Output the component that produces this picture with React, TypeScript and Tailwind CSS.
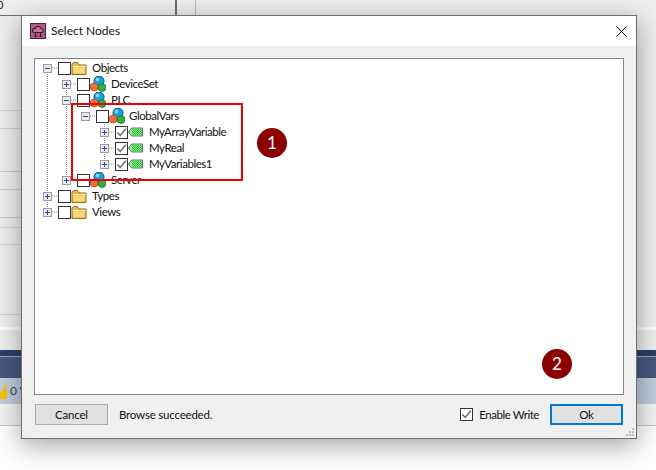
import React from "react";

const FONT = "font-['Lato','Open_Sans',sans-serif]";

function Folder() {
  return (
    <svg width="16" height="15" viewBox="0 0 16 15" className="shrink-0">
      <path d="M1 3 L1 13.5 L15 13.5 L15 4 L8 4 L6.5 1.5 L2.5 1.5 Z" fill="#eeb840" stroke="#8f7028" strokeWidth="1" />
      <path d="M2 6.5 L14 6.5 L14 12.5 L2 12.5 Z" fill="#f9d878" />
      <path d="M1.5 5.5 L14.5 5.5" stroke="#fff3c4" strokeWidth="1" />
    </svg>
  );
}

function Blobs() {
  return (
    <svg width="16" height="16" viewBox="0 0 16 16" className="shrink-0">
      <circle cx="9" cy="5" r="5" fill="#12a5ea" stroke="#0b4f96" strokeWidth="1" />
      <circle cx="7.5" cy="3.5" r="1.8" fill="#86dcfa" />
      <circle cx="4.2" cy="11" r="4" fill="#f0703a" stroke="#a8421a" strokeWidth="0.8" />
      <circle cx="12" cy="11.5" r="3.9" fill="#2fb040" stroke="#186e24" strokeWidth="0.8" />
    </svg>
  );
}

function Tag() {
  return (
    <svg width="15" height="10" viewBox="0 0 15 10" className="shrink-0">
      <path d="M0.5 5 L3.5 1 L14.5 1 L14.5 9 L3.5 9 Z" fill="#8fec8f" stroke="#6e6e6e" strokeWidth="1" />
      <path d="M4 2.5 H14 M5 3.5 H14 M4 4.5 H14 M5 5.5 H14 M4 6.5 H14 M5 7.5 H14" stroke="#12c424" strokeWidth="1" strokeDasharray="1 1" />
    </svg>
  );
}

function Check({ checked }: { checked?: boolean }) {
  return (
    <span className="w-[13px] h-[13px] border border-[#333333] bg-white shrink-0 flex items-center justify-center">
      {checked && (
        <svg width="11" height="11" viewBox="0 0 11 11">
          <path d="M1.5 5.5 L4.2 8.5 L9.8 1.8" fill="none" stroke="#666666" strokeWidth="1.4" />
        </svg>
      )}
    </span>
  );
}

function Expander({ open }: { open?: boolean }) {
  return (
    <span className="w-[9px] h-[9px] border border-[#9a9aa2] bg-[#e8eaf0] shrink-0 flex items-center justify-center">
      <svg width="7" height="7" viewBox="0 0 7 7">
        <path d={open ? "M1 3.5 H6" : "M1 3.5 H6 M3.5 1 V6"} stroke="#2c4a8c" strokeWidth="1" />
      </svg>
    </span>
  );
}

type RowT = { label: string; pad: string; gap: string; icon: "folder" | "blobs" | "tag"; open?: boolean; checked?: boolean };

const rows: RowT[] = [
  { label: "Objects", pad: "pl-[8px]", gap: "ml-[5px]", icon: "folder", open: true },
  { label: "DeviceSet", pad: "pl-[27px]", gap: "ml-[5px]", icon: "blobs" },
  { label: "PLC", pad: "pl-[27px]", gap: "ml-[5px]", icon: "blobs", open: true },
  { label: "GlobalVars", pad: "pl-[46px]", gap: "ml-[4px]", icon: "blobs", open: true },
  { label: "MyArrayVariable", pad: "pl-[65px]", gap: "ml-[6px]", icon: "tag", checked: true },
  { label: "MyReal", pad: "pl-[65px]", gap: "ml-[6px]", icon: "tag", checked: true },
  { label: "MyVariables1", pad: "pl-[65px]", gap: "ml-[6px]", icon: "tag", checked: true },
  { label: "Server", pad: "pl-[27px]", gap: "ml-[5px]", icon: "blobs" },
  { label: "Types", pad: "pl-[8px]", gap: "ml-[5px]", icon: "folder" },
  { label: "Views", pad: "pl-[8px]", gap: "ml-[5px]", icon: "folder" },
];

function TreeRow({ r }: { r: RowT }) {
  return (
    <div className={`h-[16px] flex items-center ${r.pad}`}>
      <Expander open={r.open} />
      <span className="w-[6px]" />
      <Check checked={r.checked} />
      {r.icon === "folder" && <Folder />}
      {r.icon === "blobs" && <Blobs />}
      {r.icon === "tag" && <Tag />}
      <span className={`${r.gap} text-[11.5px] leading-[16px] tracking-[-0.45px] text-[#111111] whitespace-nowrap`}>{r.label}</span>
    </div>
  );
}

function Lines() {
  // Dotted connectors of the tree, in panel coordinates
  const d = [
    "M12.5 9 V153", "M31.5 25 V121", "M69.5 65 V105",
    "M17 9 H23", "M36 25 H42", "M36 41 H42", "M55 57 H61",
    "M74 73 H80", "M74 89 H80", "M74 105 H80", "M36 121 H42", "M17 137 H23", "M17 153 H23",
  ];
  return (
    <svg className="absolute left-0 top-0" width="120" height="170">
      {d.map((p) => (
        <path key={p} d={p} stroke="#8a8a8a" strokeWidth="1" strokeDasharray="1 1" fill="none" />
      ))}
    </svg>
  );
}

function Badge({ n, cls }: { n: string; cls: string }) {
  return (
    <div className={`absolute ${cls} w-[30px] h-[30px] rounded-full bg-[#8b0000] text-white flex items-center justify-center text-[17px]`}>
      {n}
    </div>
  );
}

export default function App() {
  return (
    <div className={`relative w-[656px] h-[470px] overflow-hidden bg-white flex flex-col ${FONT}`}>
      {/* Application behind the dialog */}
      <div className="bg-[#f0f0f0] shrink-0">
        <div className="h-[16px] w-[600px] border-b border-[#707070] flex">
          <span className="text-[11px] leading-[10px] text-[#1a1a1a] -ml-[3px]">0</span>
          <span className="ml-[172px] w-[2px] h-full bg-[#707070]" />
          <span className="ml-[18px] w-[1px] h-full bg-[#b8b8b8]" />
        </div>
        <div className="h-[311px] w-[600px] flex flex-col">
          <div className="h-[95px] border-b border-[#d4d4d4]" />
          <div className="h-[18px] border-b border-[#d4d4d4]" />
          <div className="h-[43px] border-b border-[#cfcfcf]" />
          <div className="h-[18px] border-b border-[#cfcfcf]" />
          <div className="h-[28px] border-b border-[#cfcfcf]" />
          <div className="h-[10px] border-b border-[#d4d4d4]" />
          <div className="h-[17px] border-b border-[#d4d4d4]" />
          <div className="h-[70px] border-b border-[#d4d4d4]" />
        </div>
      </div>
      <div className="h-[3px] bg-white w-full shrink-0" />
      <div className="h-[20px] bg-[#f0f0f0] shrink-0" />
      <div className="h-[6px] bg-[#2b4068] shrink-0" />
      <div className="h-[1px] bg-[#9aa8c4] shrink-0" />
      <div className="h-[21px] bg-[#47597d] shrink-0" />
      <div className="h-[26px] bg-[#c3cde0] shrink-0 flex items-center">
        <svg width="7" height="16" viewBox="0 0 7 16" className="shrink-0">
          <path d="M6.5 0 L-3 16 L7 16 Z" fill="#f8c400" />
        </svg>
        <span className="ml-[3px] text-[12px] text-[#33415f]">0 V</span>
      </div>
      <div className="h-[22px] bg-[#f4f4f4] border-b border-[#c5c5cf] shrink-0" />
      <div className="flex-1 bg-white" />

      {/* Dialog window */}
      <div className="absolute left-[21px] top-[15px] w-[616px] h-[424px] border border-[#6e6e6e] bg-[#f0f0f0] flex flex-col shadow-[0_6px_26px_rgba(0,0,0,0.38)]">
        <div className="h-[30px] bg-white flex items-center shrink-0 pl-[8px] pr-[9px]">
          <svg width="16" height="16" viewBox="0 0 16 16" className="shrink-0">
            <rect width="16" height="16" fill="#5e1a3c" />
            <rect x="1" y="1" width="14" height="14" fill="#a85f82" />
            <path d="M3.5 9.5 C1.5 8 3 5 5 5.5 C6 2.5 10.5 3 11 5.5 C13.5 5.5 14 9 12 9.5 Z" fill="#b87a98" stroke="#3f0d28" strokeWidth="1.1" />
            <path d="M5.5 10 V14 M4 12.5 L5.5 14 L7 12.5 M10.5 10 V14 M9 12.5 L10.5 14 L12 12.5" fill="none" stroke="#3f0d28" strokeWidth="1" />
          </svg>
          <span className="ml-[5px] text-[12px] text-[#111111]">Select Nodes</span>
          <svg width="11" height="11" viewBox="0 0 11 11" className="ml-auto">
            <path d="M0.5 0.5 L10.5 10.5 M10.5 0.5 L0.5 10.5" stroke="#111111" strokeWidth="1" />
          </svg>
        </div>

        <div className="flex-1 flex flex-col pt-[12px] pl-[12px] pr-[12px] min-h-0">
          <div className="relative h-[337px] w-[590px] border border-[#828790] bg-white pt-[1px] shrink-0">
            <Lines />
            <div className="relative flex flex-col">
              {rows.map((r) => (
                <TreeRow key={r.label} r={r} />
              ))}
            </div>
          </div>
          <div className="flex items-center mt-[9px] h-[21px] pl-[1px] pr-[1px] text-[11.5px] tracking-[-0.2px] text-[#111111]">
            <div className="w-[73px] h-[21px] border border-[#adadad] bg-[#e1e1e1] flex items-center justify-center">Cancel</div>
            <span className="ml-[11px] mt-[1px]">Browse succeeded.</span>
            <span className="ml-auto"><Check checked /></span>
            <span className="ml-[6px] tracking-[-0.45px]">Enable Write</span>
            <div className="ml-[11px] w-[73px] h-[21px] border-2 border-[#0078d7] bg-[#e1e1e1] flex items-center justify-center">Ok</div>
          </div>
        </div>

        <svg className="absolute right-[1px] bottom-[1px]" width="10" height="10" viewBox="0 0 10 10">
          <path d="M7 1 h2 v2 h-2 z M4 4 h2 v2 h-2 z M7 4 h2 v2 h-2 z M1 7 h2 v2 h-2 z M4 7 h2 v2 h-2 z M7 7 h2 v2 h-2 z" fill="#bdbdbd" />
        </svg>
      </div>

      {/* Annotations */}
      <div className="absolute left-[71px] top-[103px] w-[172px] h-[78px] border-2 border-[#f00000]" />
      <Badge n="1" cls="left-[257px] top-[128px]" />
      <Badge n="2" cls="left-[542px] top-[349px]" />
    </div>
  );
}
